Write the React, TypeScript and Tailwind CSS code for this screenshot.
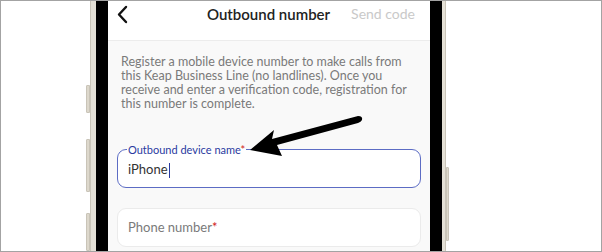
export default function App() {
    return (
        <div className="relative w-[602px] h-[252px] overflow-hidden border border-[#a3a3a3] bg-white flex font-['Lato',sans-serif]">
            {/* left margin + side buttons */}
            <div className="w-[85px] shrink-0" />
            <div className="w-[4px] shrink-0 flex flex-col">
                <div className="h-[84px]" />
                <div className="h-[28px] bg-[#ddd8cc] border border-[#c9c4b8] rounded-l-[1px]" />
                <div className="h-[26px]" />
                <div className="h-[53px] bg-[#ddd8cc] border border-[#c9c4b8] rounded-l-[1px]" />
                <div className="h-[21px]" />
                <div className="flex-1 bg-[#ddd8cc] border border-[#c9c4b8] rounded-l-[1px]" />
            </div>
            <div className="w-[6px] shrink-0 bg-[#e4e0d6] border-l border-[#c9c4b8]" />
            <div className="w-[12px] shrink-0 bg-black" />

            {/* screen */}
            <div className="w-[322px] shrink-0 flex flex-col bg-[#f9f9f9]">
                <div className="h-[40px] shrink-0 bg-white border-b border-[#ececec] flex items-start pt-[3px] px-[8px]">
                    <svg width="14" height="20" viewBox="0 0 14 20" className="mt-[1px]">
                        <path d="M10 2 L3 9.5 L10 17" fill="none" stroke="#111" strokeWidth="2.4" strokeLinecap="round" strokeLinejoin="round" />
                    </svg>
                    <div className="flex-1 text-center text-[15px] font-semibold text-[#222] leading-[20px] pl-[56px]">Outbound number</div>
                    <div className="text-[14px] text-[#c9c9c9] leading-[20px] pr-[7px]">Send code</div>
                </div>

                <div className="px-[13px] pt-[14px]">
                    <p className="text-[12.5px] leading-[14px] text-[#7a7a7a]">
                        Register a mobile device number to make calls from this Keap Business Line (no landlines). Once you receive and enter a verification code, registration for this number is complete.
                    </p>
                </div>

                <div className="px-[9px] pt-[33px] flex flex-col">
                    <fieldset className="h-[44px] border border-[#5c6cc4] rounded-[9px] bg-white px-[10px]">
                        <legend className="text-[11px] leading-[11px] text-[#2a3aa0] px-[1px] -ml-[1px]">
                            Outbound device name<span className="text-[#d02020]">*</span>
                        </legend>
                        <div className="flex items-center h-[30px] text-[13px] text-[#333]">
                            iPhone<span className="w-[1px] h-[15px] bg-[#2a3aa0] ml-[1px]" />
                        </div>
                    </fieldset>

                    <div className="mt-[20px] h-[39px] border border-[#ebebeb] rounded-[9px] bg-white px-[10px] flex items-center">
                        <span className="text-[13px] text-[#7a7a7a]">
                            Phone number<span className="text-[#d02020]">*</span>
                        </span>
                    </div>
                    <p className="mt-[2px] text-[10px] text-[#8a8a8a] leading-[12px]">This is the number we'll send the verification code to.</p>
                </div>
            </div>

            <div className="w-[12px] shrink-0 bg-black" />
            <div className="w-[4px] shrink-0 bg-[#e4e0d6] border-r border-[#c9c4b8]" />
            <div className="w-[3px] shrink-0 flex flex-col">
                <div className="h-[166px]" />
                <div className="h-[74px] bg-[#ddd8cc] border border-[#c9c4b8] rounded-r-[1px]" />
            </div>
            <div className="flex-1" />

            {/* annotation arrow */}
            <svg className="absolute left-0 top-0 pointer-events-none" width="602" height="252" viewBox="0 0 602 252">
                <path d="M249 149 L273 129 L271 138 L357 115 Q362 115 361 119 Q360 121 357 122 L276 144 L281 155 Z" fill="#000" />
            </svg>
        </div>
    );
}
